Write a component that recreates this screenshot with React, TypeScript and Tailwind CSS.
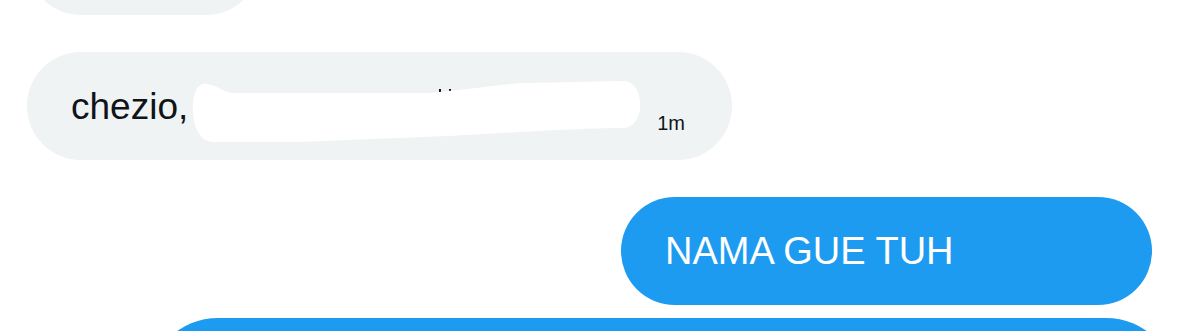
const GREY = "bg-[#eff3f4]";

function Redaction() {
  // freehand white scribble covering part of the message
  return (
    <svg
      className="absolute left-0 top-[-8px]"
      width={460}
      height={68}
      viewBox="0 0 460 68"
      fill="none"
    >
      <rect x={251} y={11} width={2} height={5} fill="#0f1419" />
      <rect x={261} y={11} width={2} height={5} fill="#0f1419" />
      <path
        d="M15 6 C25 4 35 15 45 15 L240 15 C280 12 320 5 340 5 L435 3 C458 3 458 50 435 50 C390 50 300 56 260 58 L110 64 L25 64 C0 64 0 8 15 6 Z"
        fill="#ffffff"
      />
    </svg>
  );
}

export default function App() {
  return (
    <div
      className="w-[1179px] h-[331px] overflow-hidden bg-white flex flex-col px-[27px]"
      style={{ fontFamily: '"Liberation Sans", Arial, sans-serif' }}
    >
      <div className={`-mt-[93px] h-[108px] w-[233px] shrink-0 rounded-full ${GREY}`} />

      <div className={`mt-[37px] h-[108px] w-[705px] shrink-0 rounded-full ${GREY} flex items-center px-[44px] text-[#0f1419]`}>
        <span className="text-[37px] leading-none">chezio,</span>
        <span className="relative w-[465px] h-[40px] shrink-0">
          <Redaction />
        </span>
        <span className="ml-[4px] mt-[34px] text-[20px] leading-none">1m</span>
      </div>

      <div className="mt-[37px] h-[108px] w-[531px] shrink-0 self-end rounded-full bg-[#1d9bf0] flex items-center px-[44px]">
        <span className="text-[38px] leading-none text-white">NAMA GUE TUH</span>
      </div>

      <div className="mt-[13px] ml-[121px] -mr-[24px] h-[150px] shrink-0 rounded-[70px] bg-[#1d9bf0]" />
    </div>
  );
}
